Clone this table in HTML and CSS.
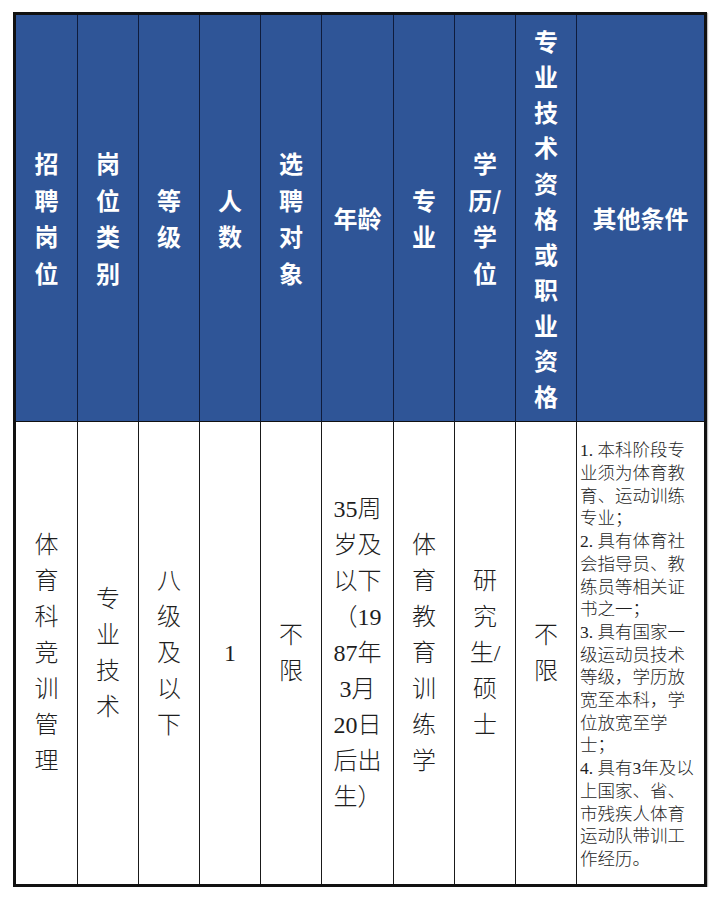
FILE: index.html
```html
<!DOCTYPE html>
<html lang="zh-CN">
<head>
<meta charset="utf-8">
<title>招聘岗位</title>
<link rel="stylesheet" href="styles.css">
</head>
<body>
<div class="table">
  <div class="cell head">招<br>聘<br>岗<br>位</div>
  <div class="cell head">岗<br>位<br>类<br>别</div>
  <div class="cell head">等<br>级</div>
  <div class="cell head">人<br>数</div>
  <div class="cell head">选<br>聘<br>对<br>象</div>
  <div class="cell head">年龄</div>
  <div class="cell head">专<br>业</div>
  <div class="cell head">学<br>历/<br>学<br>位</div>
  <div class="cell head tall">专<br>业<br>技<br>术<br>资<br>格<br>或<br>职<br>业<br>资<br>格</div>
  <div class="cell head last">其他条件</div>

  <div class="cell body">体<br>育<br>科<br>竞<br>训<br>管<br>理</div>
  <div class="cell body">专<br>业<br>技<br>术</div>
  <div class="cell body">八<br>级<br>及<br>以<br>下</div>
  <div class="cell body">1</div>
  <div class="cell body">不<br>限</div>
  <div class="cell body">35周<br>岁及<br>以下<br>（19<br>87年<br>3月<br>20日<br>后出<br>生）</div>
  <div class="cell body">体<br>育<br>教<br>育<br>训<br>练<br>学</div>
  <div class="cell body">研<br>究<br>生/<br>硕<br>士</div>
  <div class="cell body">不<br>限</div>
  <div class="cell body notes last">1. 本科阶段专<br>业须为体育教<br>育、运动训练<br>专业；<br>2. 具有体育社<br>会指导员、教<br>练员等相关证<br>书之一；<br>3. 具有国家一<br>级运动员技术<br>等级，学历放<br>宽至本科，学<br>位放宽至学<br>士；<br>4. 具有3年及以<br>上国家、省、<br>市残疾人体育<br>运动队带训工<br>作经历。</div>
</div>
</body>
</html>
```

FILE: styles.css
```css
html, body {
  margin: 0;
  padding: 0;
  background: #ffffff;
}

.table {
  margin: 12px 0 0 13px;
  width: 688px;
  border: 3px solid #111111;
  display: grid;
  grid-template-columns: 62px 61px 61px 61px 61px 72px 61px 61px 61px 127px;
  grid-template-rows: 407px 462px;
  box-shadow: 1px 1px 1px rgba(0,0,0,0.25);
}

.cell {
  box-sizing: border-box;
  border-right: 1px solid #1a1a1a;
  display: flex;
  align-items: center;
  justify-content: center;
  text-align: center;
}

.cell.last {
  border-right: none;
}

.head {
  background: #2f5597;
  color: #ffffff;
  font-family: "Noto Sans CJK SC", "Liberation Sans", sans-serif;
  font-weight: 700;
  font-size: 24px;
  line-height: 36.5px;
  border-bottom: 1px solid #111111;
  border-right-color: #0f1c3d;
}

.head.tall {
  line-height: 35.5px;
}

.body {
  color: #1e1e1e;
  font-family: "Liberation Serif", "Noto Sans CJK SC", serif;
  font-weight: 300;
  font-size: 24px;
  line-height: 36px;
}

.notes {
  justify-content: flex-start;
  text-align: left;
  padding-left: 3px;
  font-size: 17.5px;
  line-height: 22.7px;
  padding-top: 4px;
}
```
